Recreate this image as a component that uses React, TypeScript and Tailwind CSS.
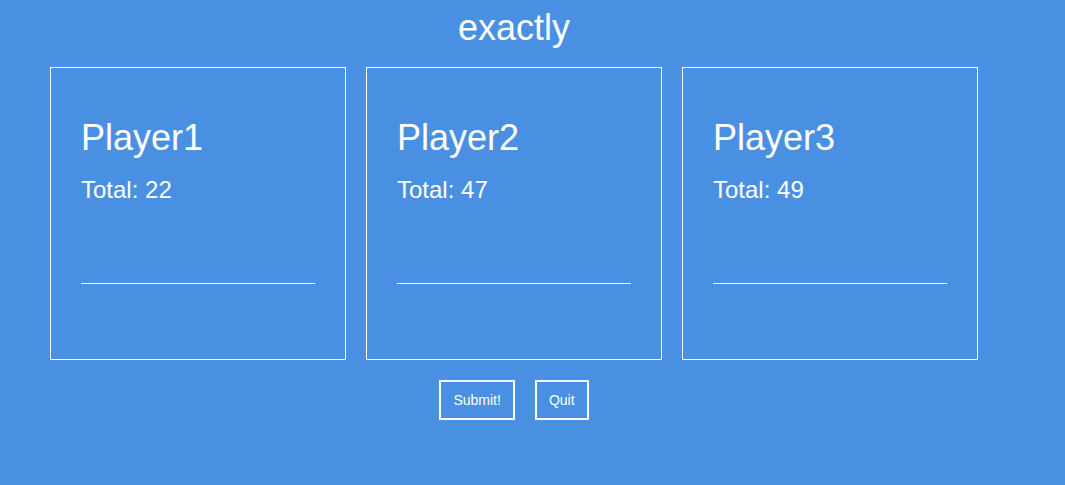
import React from 'react';

const players = [
  { name: 'Player1', total: 22 },
  { name: 'Player2', total: 47 },
  { name: 'Player3', total: 49 },
];

export default function App() {
  return (
    <main className="min-h-screen bg-[#4a90e2] pr-[37px] font-['Liberation_Sans',Arial,sans-serif] text-white">
      <h1 className="pt-2 text-center text-[36px] leading-[40px]">exactly</h1>
      <form onSubmit={(e) => e.preventDefault()}>
        <div className="mt-[19px] grid grid-cols-3 gap-5 px-[50px]">
          {players.map((p) => (
            <section key={p.name} className="border border-white px-[30px] pt-[50px] pb-[75px]">
              <h2 className="text-[36px] leading-[40px]">{p.name}</h2>
              <p className="mt-[18px] text-2xl leading-[28px]">Total: {p.total}</p>
              <input
                type="text"
                aria-label={`Answer for ${p.name}`}
                className="mt-[40px] block h-10 w-full border-b border-white bg-transparent text-2xl outline-none"
              />
            </section>
          ))}
        </div>
        <div className="mt-5 flex justify-center gap-5">
          <button type="submit" className="h-10 border-2 border-white px-3 text-[14px] leading-4">Submit!</button>
          <button type="button" className="h-10 border-2 border-white px-3 text-[14px] leading-4">Quit</button>
        </div>
      </form>
    </main>
  );
}
